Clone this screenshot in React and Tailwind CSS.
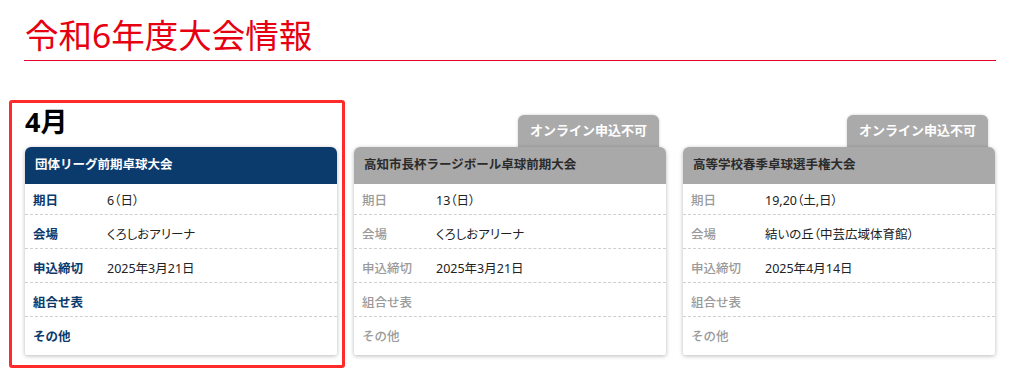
const font = { fontFamily: '"Noto Sans", "Noto Sans CJK JP", sans-serif' };

const events = [
  {
    month: '4月',
    title: '団体リーグ前期卓球大会',
    active: true,
    rows: [
      ['期日', '6（日）'],
      ['会場', 'くろしおアリーナ'],
      ['申込締切', '2025年3月21日'],
      ['組合せ表', ''],
      ['その他', ''],
    ],
  },
  {
    title: '高知市長杯ラージボール卓球前期大会',
    closed: true,
    rows: [
      ['期日', '13（日）'],
      ['会場', 'くろしおアリーナ'],
      ['申込締切', '2025年3月21日'],
      ['組合せ表', ''],
      ['その他', ''],
    ],
  },
  {
    title: '高等学校春季卓球選手権大会',
    closed: true,
    rows: [
      ['期日', '19,20（土,日）'],
      ['会場', '結いの丘（中芸広域体育館）'],
      ['申込締切', '2025年4月14日'],
      ['組合せ表', ''],
      ['その他', ''],
    ],
  },
];

const EventCard = ({ ev }) => {
  return (
    <div className="relative flex flex-col">
      {/* top: month or tab */}
      <div className="h-[47px] flex items-end">
        {ev.month && (
          <div className="pb-[12px] text-[27px] leading-[27px] font-bold text-black">{ev.month}</div>
        )}
        {ev.closed && (
          <div className="ml-auto mr-[7px] h-[32px] px-[12px] flex items-center rounded-t-[6px] bg-[#aaaaaa] text-white text-[13px] font-bold shadow-[0_0_3px_rgba(0,0,0,0.2)]">
            オンライン申込不可
          </div>
        )}
      </div>

      {/* card */}
      <div className="relative bg-white rounded-t-[6px] rounded-b-[2px] shadow-[0_1px_4px_rgba(0,0,0,0.28)] pb-[4px]">
        <div
          className={
            ev.active
              ? 'h-[37px] flex items-center px-[10px] rounded-t-[6px] bg-[#0b3a6c] text-white text-[12.5px] font-bold'
              : 'h-[37px] flex items-center px-[10px] rounded-t-[6px] bg-[#a9a9a9] text-[#2b2b2b] text-[12.5px] font-bold'
          }
        >
          {ev.title}
        </div>
        {ev.rows.map(([label, value], i) => (
          <div
            key={label}
            className={
              (i === 0 ? 'h-[31px] pt-[5px] ' : 'h-[34px] pt-[7px] ') +
              (i < ev.rows.length - 1 ? 'border-b border-dashed border-[#cfcfcf] ' : '') +
              'flex items-center px-[8px] text-[12.5px]'
            }
          >
            <div
              className={
                ev.active
                  ? 'w-[74px] shrink-0 font-bold text-[#0b3a6c]'
                  : 'w-[74px] shrink-0 font-medium text-[#9a9a9a]'
              }
            >
              {label}
            </div>
            <div className="text-[#222] [font-feature-settings:'palt']">{value}</div>
          </div>
        ))}
      </div>

      {/* highlight frame */}
      {ev.active && (
        <div className="absolute -left-[16px] top-0 -right-[8px] -bottom-[13px] border-[3px] border-[#ff2b2b] rounded-[3px] pointer-events-none" />
      )}
    </div>
  );
};

const App = () => {
  return (
    <div className="w-[1020px] h-[385px] bg-white overflow-hidden" style={font}>
      {/* title */}
      <div className="mx-[24px] pt-[18px] pb-[8px] border-b border-[#e5002d]">
        <h1 className="text-[33.5px] leading-[34px] text-[#e60012] pl-[1px]">令和6年度大会情報</h1>
      </div>

      {/* events */}
      <div className="ml-[25px] w-[970px] mt-[39px] grid grid-cols-3 gap-x-[17px]">
        {events.map((ev) => (
          <EventCard key={ev.title} ev={ev} />
        ))}
      </div>
    </div>
  );
};

export default App;
